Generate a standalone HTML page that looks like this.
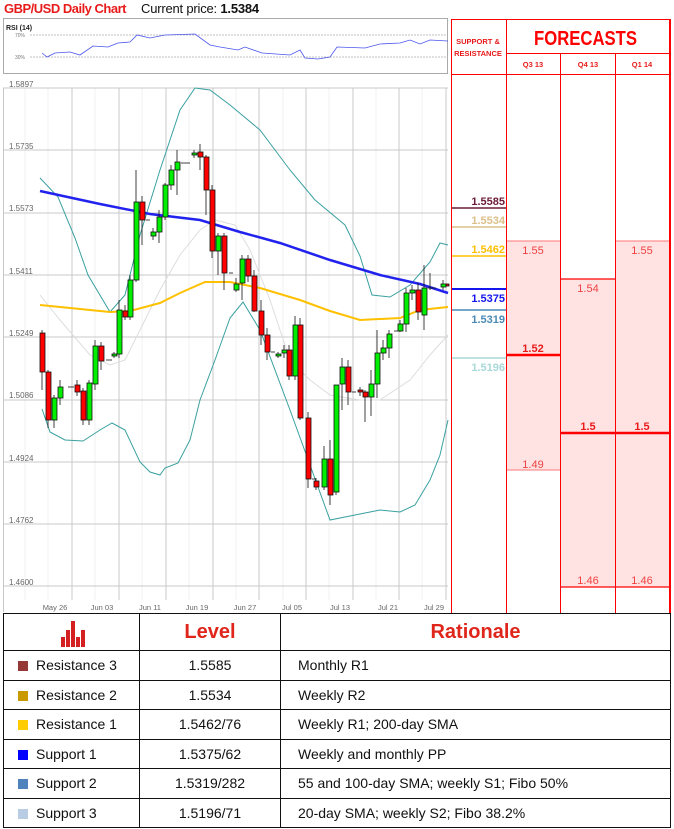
<!DOCTYPE html>
<html><head><meta charset="utf-8"><style>
*{margin:0;padding:0;box-sizing:border-box}
body{width:674px;height:829px;background:#fff;font-family:"Liberation Sans",sans-serif;position:relative;overflow:hidden}
.t{position:absolute;white-space:nowrap}
table{position:absolute;left:3px;top:613px;width:668px;border-collapse:collapse;font-size:14px;color:#111}
td{border:1.5px solid #111;height:29.5px}
.c2{text-align:center}
.c3{padding-left:17px}
.c1{padding-left:14px}
.sq{display:inline-block;width:10px;height:10px;margin-right:8px;vertical-align:-1px}
.h{font-weight:bold;color:#e0261b;font-size:20px;text-align:center;height:37px}
</style></head><body>
<div class="t" style="left:4px;top:1px;font-size:13px;color:#e81b1b;font-weight:bold;letter-spacing:-0.5px">GBP/USD Daily Chart</div>
<div class="t" style="left:141px;top:1px;font-size:13px;color:#111;letter-spacing:-0.2px">Current price: <b>1.5384</b></div>

<svg style="position:absolute;left:0;top:0" width="674" height="615" font-family="Liberation Sans">
<rect x="3.5" y="18.5" width="444" height="55" fill="#fff" stroke="#aaa"/>
<text x="6" y="30" font-size="7" font-weight="bold" fill="#222">RSI (14)</text>
<line x1="30" y1="35" x2="447" y2="35" stroke="#aaa" stroke-dasharray="2,1" stroke-width="0.7"/>
<line x1="30" y1="57" x2="447" y2="57" stroke="#aaa" stroke-dasharray="2,1" stroke-width="0.7"/>
<text x="25" y="37" font-size="5" fill="#777" text-anchor="end">70%</text>
<text x="25" y="59" font-size="5" fill="#777" text-anchor="end">30%</text>
<polyline fill="none" stroke="#4a55ee" stroke-width="0.8" points="42,53 47,57 55,53 70,52 80,55 93,46 108,47 118,43 130,42 137,35 150,38 165,35 195,34 210,45 220,47 238,50 245,47 262,53 290,55 300,50 305,58 318,59 330,57 337,47 365,48 380,44 400,43 410,40 420,44 430,40 448,41"/>
<g stroke="#f0f0f0" stroke-width="1">
<line x1="25" y1="88" x2="25" y2="600"/><line x1="48" y1="88" x2="48" y2="600"/><line x1="95" y1="88" x2="95" y2="600"/><line x1="142" y1="88" x2="142" y2="600"/><line x1="189" y1="88" x2="189" y2="600"/><line x1="236" y1="88" x2="236" y2="600"/><line x1="283" y1="88" x2="283" y2="600"/><line x1="329" y1="88" x2="329" y2="600"/><line x1="376" y1="88" x2="376" y2="600"/><line x1="422" y1="88" x2="422" y2="600"/>
</g>
<g stroke="#c8c8c8" stroke-width="1">
<line x1="72" y1="88" x2="72" y2="600"/><line x1="119" y1="88" x2="119" y2="600"/><line x1="166" y1="88" x2="166" y2="600"/><line x1="213" y1="88" x2="213" y2="600"/><line x1="259" y1="88" x2="259" y2="600"/><line x1="306" y1="88" x2="306" y2="600"/><line x1="353" y1="88" x2="353" y2="600"/><line x1="399" y1="88" x2="399" y2="600"/><line x1="446" y1="88" x2="446" y2="600"/>
<line x1="3" y1="88" x2="448" y2="88"/><line x1="3" y1="150" x2="448" y2="150"/><line x1="3" y1="213" x2="448" y2="213"/><line x1="3" y1="275" x2="448" y2="275"/><line x1="3" y1="337" x2="448" y2="337"/><line x1="3" y1="400" x2="448" y2="400"/><line x1="3" y1="462" x2="448" y2="462"/><line x1="3" y1="524" x2="448" y2="524"/><line x1="3" y1="586" x2="448" y2="586"/>
<line x1="3.5" y1="88" x2="3.5" y2="612"/>
</g>
<g font-size="8" fill="#666">
<text x="9" y="87">1.5897</text><text x="9" y="149">1.5735</text><text x="9" y="211">1.5573</text><text x="9" y="274">1.5411</text><text x="9" y="336">1.5249</text><text x="9" y="398">1.5086</text><text x="9" y="461">1.4924</text><text x="9" y="523">1.4762</text><text x="9" y="585">1.4600</text>
</g>
<g font-size="7.5" fill="#666" text-anchor="middle">
<text x="55" y="610">May 26</text><text x="102" y="610">Jun 03</text><text x="150" y="610">Jun 11</text><text x="197" y="610">Jun 19</text><text x="245" y="610">Jun 27</text><text x="292" y="610">Jul 05</text><text x="340" y="610">Jul 13</text><text x="388" y="610">Jul 21</text><text x="434" y="610">Jul 29</text>
</g>
<polyline fill="none" stroke="#ddd" stroke-width="1" points="40,295 60,320 90,355 110,365 125,360 140,330 160,290 180,255 200,230 215,220 235,225 250,250 270,300 290,360 310,380 330,395 360,400 380,400 410,380 430,355 448,335"/>
<polyline fill="none" stroke="#3aa0a0" stroke-width="1" points="40,178 58,197 75,238 88,275 110,312 125,295 140,235 160,170 180,110 195,88 210,90 230,105 260,130 290,170 315,200 345,225 360,256 372,295 390,297 410,285 430,262 440,243 448,245"/>
<polyline fill="none" stroke="#3aa0a0" stroke-width="1" points="42,409 50,432 65,440 83,441 100,430 112,423 125,430 140,462 150,472 160,475 165,468 178,463 190,440 200,400 215,360 230,318 243,302 260,330 290,410 310,465 330,520 355,515 380,510 400,512 415,505 430,480 440,455 448,420"/>
<polyline fill="none" stroke="#ffc000" stroke-width="2" points="40,305 70,308 110,312 130,311 160,303 180,293 205,282 230,282 260,288 300,300 330,311 360,320 400,318 420,310 448,307"/>
<polyline fill="none" stroke="#2222ee" stroke-width="2.5" points="40,191 100,204 150,214 200,220 240,232 280,243 330,260 380,275 420,284 448,293"/>
<g stroke="#111" stroke-width="0.8">
<line x1="42" y1="330" x2="42" y2="390"/><rect x="40" y="333" width="5" height="39" fill="#f00"/>
<line x1="48" y1="370" x2="48" y2="428"/><rect x="46" y="372" width="5" height="48" fill="#f00"/>
<line x1="54" y1="395" x2="54" y2="428"/><rect x="52" y="398" width="5" height="22" fill="#0e0"/>
<line x1="60" y1="380" x2="60" y2="405"/><rect x="58" y="387" width="5" height="11" fill="#0e0"/>
<line x1="68" y1="387" x2="74" y2="387"/>
<line x1="77" y1="380" x2="77" y2="396"/><rect x="75" y="385" width="5" height="7" fill="#f00"/>
<line x1="83" y1="388" x2="83" y2="425"/><rect x="81" y="391" width="5" height="29" fill="#f00"/>
<line x1="89" y1="380" x2="89" y2="425"/><rect x="87" y="383" width="5" height="37" fill="#0e0"/>
<line x1="95" y1="340" x2="95" y2="390"/><rect x="93" y="346" width="5" height="38" fill="#0e0"/>
<line x1="101" y1="342" x2="101" y2="370"/><rect x="99" y="346" width="5" height="15" fill="#f00"/>
<line x1="106" y1="360" x2="112" y2="360"/>
<line x1="114" y1="352" x2="114" y2="358"/><rect x="112" y="354" width="5" height="2" fill="#0e0"/>
<line x1="119" y1="300" x2="119" y2="358"/><rect x="117" y="310" width="5" height="44" fill="#0e0"/>
<line x1="125" y1="305" x2="125" y2="320"/><rect x="123" y="311" width="5" height="6" fill="#f00"/>
<line x1="130" y1="275" x2="130" y2="320"/><rect x="128" y="280" width="5" height="37" fill="#0e0"/>
<line x1="136" y1="170" x2="136" y2="282"/><rect x="134" y="202" width="5" height="78" fill="#0e0"/>
<line x1="142" y1="196" x2="142" y2="245"/><rect x="140" y="202" width="5" height="18" fill="#f00"/>
<line x1="146" y1="220" x2="150" y2="220"/>
<line x1="153" y1="228" x2="153" y2="240"/><rect x="151" y="232" width="5" height="4" fill="#0e0"/>
<line x1="159" y1="210" x2="159" y2="243"/><rect x="157" y="217" width="5" height="15" fill="#0e0"/>
<line x1="165" y1="183" x2="165" y2="220"/><rect x="163" y="185" width="5" height="32" fill="#0e0"/>
<line x1="171" y1="165" x2="171" y2="190"/><rect x="169" y="170" width="5" height="15" fill="#0e0"/>
<line x1="177" y1="150" x2="177" y2="195"/><rect x="175" y="162" width="5" height="8" fill="#0e0"/>
<line x1="181" y1="163" x2="190" y2="163"/>
<line x1="194" y1="150" x2="194" y2="158"/><rect x="192" y="153" width="5" height="2" fill="#0e0"/>
<line x1="200" y1="144" x2="200" y2="170"/><rect x="198" y="152" width="5" height="5" fill="#f00"/>
<line x1="206" y1="155" x2="206" y2="215"/><rect x="204" y="157" width="5" height="33" fill="#f00"/>
<line x1="212" y1="185" x2="212" y2="258"/><rect x="210" y="190" width="5" height="61" fill="#f00"/>
<line x1="218" y1="233" x2="218" y2="275"/><rect x="216" y="236" width="5" height="15" fill="#0e0"/>
<line x1="224" y1="233" x2="224" y2="290"/><rect x="222" y="236" width="5" height="37" fill="#f00"/>
<line x1="229" y1="273" x2="233" y2="273"/>
<line x1="236" y1="278" x2="236" y2="292"/><rect x="234" y="284" width="5" height="6" fill="#0e0"/>
<line x1="242" y1="255" x2="242" y2="300"/><rect x="240" y="259" width="5" height="24" fill="#0e0"/>
<line x1="248" y1="255" x2="248" y2="282"/><rect x="246" y="259" width="5" height="17" fill="#f00"/>
<line x1="254" y1="270" x2="254" y2="312"/><rect x="252" y="276" width="5" height="35" fill="#f00"/>
<line x1="261" y1="300" x2="261" y2="345"/><rect x="259" y="311" width="5" height="24" fill="#f00"/>
<line x1="267" y1="328" x2="267" y2="360"/><rect x="265" y="335" width="5" height="17" fill="#f00"/>
<line x1="271" y1="352" x2="275" y2="352"/>
<line x1="278" y1="352" x2="278" y2="358"/><rect x="276" y="354" width="5" height="2" fill="#0e0"/>
<line x1="284" y1="345" x2="284" y2="358"/><rect x="282" y="350" width="5" height="3" fill="#0e0"/>
<line x1="289" y1="345" x2="289" y2="380"/><rect x="287" y="350" width="5" height="26" fill="#f00"/>
<line x1="295" y1="316" x2="295" y2="380"/><rect x="293" y="325" width="5" height="51" fill="#0e0"/>
<line x1="300" y1="318" x2="300" y2="420"/><rect x="298" y="325" width="5" height="93" fill="#f00"/>
<line x1="308" y1="412" x2="308" y2="488"/><rect x="306" y="418" width="5" height="61" fill="#f00"/>
<line x1="312" y1="479" x2="316" y2="479"/>
<line x1="316" y1="478" x2="316" y2="490"/><rect x="314" y="481" width="5" height="6" fill="#f00"/>
<line x1="324" y1="446" x2="324" y2="490"/><rect x="322" y="459" width="5" height="28" fill="#0e0"/>
<line x1="330" y1="440" x2="330" y2="505"/><rect x="328" y="459" width="5" height="36" fill="#f00"/>
<line x1="336" y1="385" x2="336" y2="495"/><rect x="334" y="385" width="5" height="107" fill="#0e0"/>
<line x1="342" y1="358" x2="342" y2="410"/><rect x="340" y="367" width="5" height="17" fill="#0e0"/>
<line x1="348" y1="360" x2="348" y2="405"/><rect x="346" y="367" width="5" height="25" fill="#f00"/>
<line x1="352" y1="392" x2="356" y2="392"/>
<line x1="360" y1="387" x2="360" y2="396"/><rect x="358" y="390" width="5" height="2" fill="#f00"/>
<line x1="365" y1="390" x2="365" y2="422"/><rect x="363" y="392" width="5" height="5" fill="#f00"/>
<line x1="371" y1="370" x2="371" y2="416"/><rect x="369" y="384" width="5" height="13" fill="#0e0"/>
<line x1="377" y1="330" x2="377" y2="398"/><rect x="375" y="353" width="5" height="31" fill="#0e0"/>
<line x1="383" y1="340" x2="383" y2="360"/><rect x="381" y="348" width="5" height="5" fill="#0e0"/>
<line x1="389" y1="330" x2="389" y2="358"/><rect x="387" y="334" width="5" height="14" fill="#0e0"/>
<line x1="394" y1="331" x2="398" y2="331"/>
<line x1="400" y1="320" x2="400" y2="332"/><rect x="398" y="324" width="5" height="7" fill="#0e0"/>
<line x1="406" y1="288" x2="406" y2="332"/><rect x="404" y="293" width="5" height="31" fill="#0e0"/>
<line x1="412" y1="285" x2="412" y2="300"/><rect x="410" y="290" width="5" height="3" fill="#0e0"/>
<line x1="418" y1="283" x2="418" y2="320"/><rect x="416" y="290" width="5" height="22" fill="#f00"/>
<line x1="424" y1="265" x2="424" y2="330"/><rect x="422" y="288" width="5" height="27" fill="#0e0"/>
<line x1="430" y1="273" x2="430" y2="290"/><line x1="428" y1="288" x2="436" y2="288"/>
<line x1="443" y1="280" x2="443" y2="290"/><rect x="441" y="284" width="5" height="3" fill="#0e0"/>
<rect x="446" y="284" width="3" height="2" fill="#f00"/>
</g>
<rect x="506" y="241" width="54" height="229" fill="#ffe3e3"/>
<rect x="560" y="279" width="55" height="308" fill="#ffe3e3"/>
<rect x="615" y="241" width="54" height="346" fill="#ffe3e3"/>
<g stroke="#f77" stroke-width="1">
<line x1="506" y1="241" x2="560" y2="241"/><line x1="506" y1="470" x2="560" y2="470"/>
<line x1="615" y1="241" x2="669" y2="241"/>
</g>
<g stroke="#f00" stroke-width="1.2">
<line x1="560" y1="279" x2="615" y2="279"/><line x1="560" y1="587" x2="669" y2="587"/>
</g>
<line x1="506" y1="355" x2="560" y2="355" stroke="#f00" stroke-width="2.5"/>
<line x1="560" y1="433" x2="669" y2="433" stroke="#f00" stroke-width="2.5"/>
<g stroke="#f00" stroke-width="1">
<line x1="451.5" y1="19" x2="451.5" y2="613"/><line x1="506.5" y1="19" x2="506.5" y2="613"/>
<line x1="560.5" y1="53" x2="560.5" y2="613"/><line x1="615.5" y1="53" x2="615.5" y2="613"/>
<line x1="451" y1="19.5" x2="671" y2="19.5"/><line x1="506" y1="53.5" x2="670" y2="53.5"/><line x1="451" y1="74.5" x2="670" y2="74.5"/>
</g>
<line x1="670" y1="19" x2="670" y2="613" stroke="#f00" stroke-width="2"/>
<text x="478" y="44" font-size="7.5" font-weight="bold" fill="#e81b1b" text-anchor="middle">SUPPORT &amp;</text>
<text x="478" y="56" font-size="7.5" font-weight="bold" fill="#e81b1b" text-anchor="middle">RESISTANCE</text>
<text x="534" y="45" font-size="20" font-weight="bold" fill="#f00" textLength="103" lengthAdjust="spacingAndGlyphs">FORECASTS</text>
<g font-size="7.5" font-weight="bold" fill="#e81b1b" text-anchor="middle">
<text x="533" y="67">Q3 13</text><text x="588" y="67">Q4 13</text><text x="642" y="67">Q1 14</text>
</g>
<line x1="452" y1="208" x2="506" y2="208" stroke="#6b1c3a" stroke-width="1.5"/>
<line x1="452" y1="227" x2="506" y2="227" stroke="#dcc08a" stroke-width="1.5"/>
<line x1="452" y1="256" x2="506" y2="256" stroke="#ffc000" stroke-width="1.5"/>
<line x1="452" y1="289" x2="506" y2="289" stroke="#1515ee" stroke-width="2"/>
<line x1="452" y1="310" x2="506" y2="310" stroke="#4a8ab5" stroke-width="1.5"/>
<line x1="452" y1="358" x2="506" y2="358" stroke="#a8d8d8" stroke-width="1.5"/>
<g font-size="11" font-weight="bold" text-anchor="end">
<text x="505" y="205" fill="#6b1c3a">1.5585</text>
<text x="505" y="224" fill="#dcc08a">1.5534</text>
<text x="505" y="253" fill="#ffc000">1.5462</text>
<text x="505" y="302" fill="#1515ee">1.5375</text>
<text x="505" y="323" fill="#4a8ab5">1.5319</text>
<text x="505" y="371" fill="#a8d8d8">1.5196</text>
</g>
<g font-size="11" fill="#f04040" text-anchor="middle">
<text x="533" y="254">1.55</text><text x="642" y="254">1.55</text><text x="588" y="292">1.54</text>
<text x="533" y="468">1.49</text><text x="588" y="584">1.46</text><text x="642" y="584">1.46</text>
</g>
<g font-size="11" font-weight="bold" fill="#e81b1b" text-anchor="middle">
<text x="533" y="352">1.52</text><text x="588" y="430">1.5</text><text x="642" y="430">1.5</text>
</g>
</svg>

<table>
<tr><td style="width:135px;height:37px;position:relative">
<svg width="135" height="36" style="display:block"><g fill="#d42020"><rect x="57" y="23" width="4" height="10"/><rect x="62" y="16" width="4" height="17"/><rect x="67" y="7" width="4" height="26"/><rect x="72" y="23" width="4" height="10"/><rect x="77" y="16" width="4" height="17"/></g></svg></td>
<td class="h" style="width:141px">Level</td><td class="h">Rationale</td></tr>
<tr><td class="c1"><span class="sq" style="background:#953735"></span>Resistance 3</td><td class="c2">1.5585</td><td class="c3">Monthly R1</td></tr>
<tr><td class="c1"><span class="sq" style="background:#c89a00"></span>Resistance 2</td><td class="c2">1.5534</td><td class="c3">Weekly R2</td></tr>
<tr><td class="c1"><span class="sq" style="background:#ffcc00"></span>Resistance 1</td><td class="c2">1.5462/76</td><td class="c3">Weekly R1; 200-day SMA</td></tr>
<tr><td class="c1"><span class="sq" style="background:#0000ff"></span>Support 1</td><td class="c2">1.5375/62</td><td class="c3">Weekly and monthly PP</td></tr>
<tr><td class="c1"><span class="sq" style="background:#4f81bd"></span>Support 2</td><td class="c2">1.5319/282</td><td class="c3">55 and 100-day SMA; weekly S1; Fibo 50%</td></tr>
<tr><td class="c1"><span class="sq" style="background:#b8cce4"></span>Support 3</td><td class="c2">1.5196/71</td><td class="c3">20-day SMA; weekly S2; Fibo 38.2%</td></tr>
</table>
</body></html>
